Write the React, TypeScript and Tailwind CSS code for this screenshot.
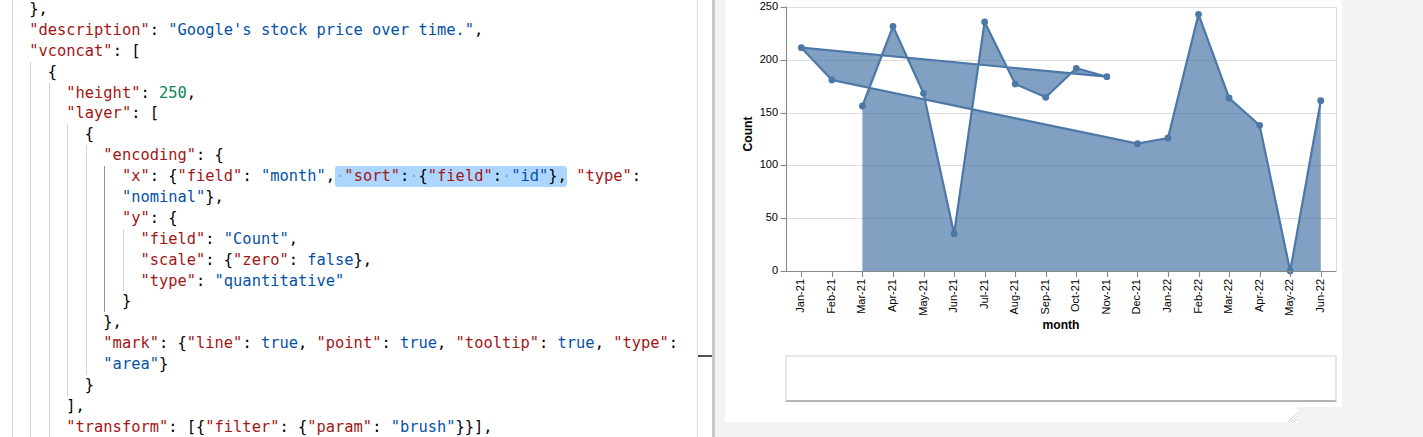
import React from "react";

const K = ({ children }: { children: React.ReactNode }) => <span className="text-[#a31515]">{children}</span>;
const S = ({ children }: { children: React.ReactNode }) => <span className="text-[#0451a5]">{children}</span>;
const N = ({ children }: { children: React.ReactNode }) => <span className="text-[#098658]">{children}</span>;
const P = ({ children }: { children: React.ReactNode }) => <span className="text-[#000000]">{children}</span>;
const W = () => <span className="text-[#8da6c2]">·</span>;

type Line = { indent: number; active?: number; node: React.ReactNode };

const lines: Line[] = [
  { indent: 1, node: <P>{"},"}</P> },
  { indent: 1, node: <><K>"description"</K><P>: </P><S>"Google's stock price over time."</S><P>,</P></> },
  { indent: 1, node: <><K>"vconcat"</K><P>: [</P></> },
  { indent: 2, node: <P>{"{"}</P> },
  { indent: 3, node: <><K>"height"</K><P>: </P><N>250</N><P>,</P></> },
  { indent: 3, node: <><K>"layer"</K><P>: [</P></> },
  { indent: 4, node: <P>{"{"}</P> },
  { indent: 5, node: <><K>"encoding"</K><P>{": {"}</P></> },
  {
    indent: 6,
    active: 5,
    node: (
      <>
        <K>"x"</K><P>{": {"}</P><K>"field"</K><P>: </P><S>"month"</S><P>,</P>
        <span className="inline-block rounded-[3px] bg-[#add6ff] leading-[20.9px]">
          <W /><K>"sort"</K><P>:</P><W /><P>{"{"}</P><K>"field"</K><P>:</P><W /><S>"id"</S><P>{"},"}</P>
        </span>
        <P> </P><K>"type"</K><P>:</P>
      </>
    ),
  },
  { indent: 6, active: 5, node: <><S>"nominal"</S><P>{"},"}</P></> },
  { indent: 6, active: 5, node: <><K>"y"</K><P>{": {"}</P></> },
  { indent: 7, active: 5, node: <><K>"field"</K><P>: </P><S>"Count"</S><P>,</P></> },
  { indent: 7, active: 5, node: <><K>"scale"</K><P>{": {"}</P><K>"zero"</K><P>: </P><S>false</S><P>{"},"}</P></> },
  { indent: 7, active: 5, node: <><K>"type"</K><P>: </P><S>"quantitative"</S></> },
  { indent: 6, active: 5, node: <P>{"}"}</P> },
  { indent: 5, node: <P>{"},"}</P> },
  {
    indent: 5,
    node: (
      <>
        <K>"mark"</K><P>{": {"}</P><K>"line"</K><P>: </P><S>true</S><P>, </P><K>"point"</K><P>: </P><S>true</S>
        <P>, </P><K>"tooltip"</K><P>: </P><S>true</S><P>, </P><K>"type"</K><P>:</P>
      </>
    ),
  },
  { indent: 5, node: <><S>"area"</S><P>{"}"}</P></> },
  { indent: 4, node: <P>{"}"}</P> },
  { indent: 3, node: <P>{"],"}</P> },
  {
    indent: 3,
    node: (
      <>
        <K>"transform"</K><P>{": [{"}</P><K>"filter"</K><P>{": {"}</P><K>"param"</K><P>: </P><S>"brush"</S>
        <P>{"}}],"}</P>
      </>
    ),
  },
];

const months = [
  "Jan-21", "Feb-21", "Mar-21", "Apr-21", "May-21", "Jun-21", "Jul-21", "Aug-21", "Sep-21",
  "Oct-21", "Nov-21", "Dec-21", "Jan-22", "Feb-22", "Mar-22", "Apr-22", "May-22", "Jun-22",
];
const ys = [47.7, 80, 106, 26.3, 93.3, 233.7, 22, 84, 97.3, 68.3, 76.7, 143.7, 138, 14.3, 98, 125.3, 271, 100.7];
const order = [2, 3, 4, 5, 6, 7, 8, 9, 10, 0, 1, 11, 12, 13, 14, 15, 16, 17];
const xOf = (i: number) => 76.3 + 30.556 * i;

function Chart() {
  const pts = order.map((i) => `${xOf(i).toFixed(1)},${ys[i]}`);
  const area = [...pts, `${xOf(17).toFixed(1)},271`, `${xOf(2).toFixed(1)},271`].join(" ");
  const line = pts.join(" ");
  const grid = [0, 50, 100, 150, 200, 250];
  return (
    <svg width={617} height={350} className="block shrink-0">
      <g fontFamily="'Liberation Sans', Arial, sans-serif">
        {grid.map((v) => {
          const y = Math.round(271 - v * 1.056) + 0.5;
          return <line key={v} x1={61} x2={611} y1={y} y2={y} stroke="#ddd" strokeWidth={1} />;
        })}
        <line x1={611.5} x2={611.5} y1={7} y2={271} stroke="#ddd" />
        <polygon points={area} fill="#4c78a8" fillOpacity={0.7} fillRule="nonzero" />
        <polyline points={line} fill="none" stroke="#4c78a8" strokeWidth={2.2} strokeLinejoin="miter" />
        {order.map((i) => (
          <circle key={i} cx={xOf(i)} cy={ys[i]} r={3.4} fill="#4c78a8" />
        ))}
        {/* y axis */}
        <line x1={61.5} x2={61.5} y1={6.5} y2={272} stroke="#888" strokeWidth={1.1} />
        {grid.map((v) => {
          const y = Math.round(271 - v * 1.056) + 0.5;
          return (
            <g key={v}>
              <line x1={55.5} x2={61.5} y1={y} y2={y} stroke="#888" strokeWidth={1.1} />
              <text x={53} y={y} textAnchor="end" dominantBaseline="middle" fontSize={11} fill="#000">
                {v}
              </text>
            </g>
          );
        })}
        <text
          transform="translate(24,134) rotate(-90)"
          textAnchor="middle"
          dominantBaseline="middle"
          fontSize={12.1}
          fontWeight="bold"
          fill="#000"
        >
          Count
        </text>
        {/* x axis */}
        <line x1={61} x2={611.5} y1={271.5} y2={271.5} stroke="#888" strokeWidth={1.1} />
        {months.map((m, i) => {
          const x = Math.round(xOf(i)) + 0.5;
          return (
            <g key={m}>
              <line x1={x} x2={x} y1={271.5} y2={277} stroke="#888" strokeWidth={1.1} />
              <text
                transform={`translate(${x},279) rotate(-90)`}
                textAnchor="end"
                dominantBaseline="middle"
                fontSize={11}
                fill="#000"
              >
                {m}
              </text>
            </g>
          );
        })}
        <text x={336} y={326} textAnchor="middle" dominantBaseline="middle" fontSize={12.1} fontWeight="bold" fill="#000">
          month
        </text>
      </g>
    </svg>
  );
}

export default function App() {
  return (
    <div className="flex h-[437px] w-[1423px] overflow-hidden bg-white">
      <div className="w-[697px] shrink-0 overflow-hidden bg-white">
        <div className="-mt-[1px] pl-[11.7px] font-['DejaVu_Sans_Mono',monospace] text-[15.4px] leading-[20.9px] text-black">
          {lines.map((ln, idx) => (
            <div key={idx} className="flex h-[20.9px] items-stretch whitespace-pre">
              {Array.from({ length: ln.indent }).map((_, g) => (
                <span
                  key={g}
                  className={
                    g === ln.active
                      ? "w-[2ch] shrink-0 border-l border-[#939393]"
                      : "w-[2ch] shrink-0 border-l border-[#d3d3d3]"
                  }
                />
              ))}
              <span className="-ml-px leading-[20.9px]">{ln.node}</span>
            </div>
          ))}
        </div>
      </div>
      <div className="w-px shrink-0 bg-[#dcdcdc]" />
      <div className="w-[14px] shrink-0 bg-white pt-[355px]">
        <div className="h-[2px] bg-[#505050]" />
      </div>
      <div className="w-[3px] shrink-0 bg-[#c8c8c8]" />
      <div className="flex-1 bg-[#f3f3f3] pl-[10px]">
        <div className="flex h-[407px] w-[617px] flex-col bg-white">
          <Chart />
          <div className="ml-[60px] mt-[5px] h-[47px] w-[552px] border-2 border-[#e8e8e8] border-b-[#b4b4b4]" />
        </div>
        <div className="flex h-[15px] w-[572px] items-end justify-end bg-white">
          <svg width={10} height={10} className="block">
            <line x1={10} y1={1} x2={1} y2={10} stroke="#d0d0d0" />
            <line x1={10} y1={4} x2={4} y2={10} stroke="#d0d0d0" />
            <line x1={10} y1={7} x2={7} y2={10} stroke="#d0d0d0" />
          </svg>
        </div>
      </div>
    </div>
  );
}
